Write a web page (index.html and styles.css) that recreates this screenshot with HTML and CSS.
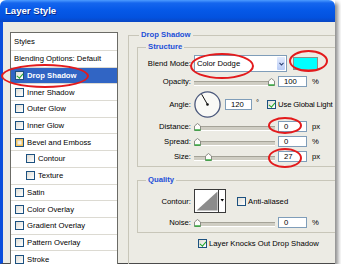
FILE: index.html
```html
<!DOCTYPE html>
<html lang="en">
<head>
<meta charset="UTF-8">
<meta name="viewport" content="width=device-width,initial-scale=1">
<title>Layer Style</title>
<link rel="stylesheet" href="styles.css">
</head>

<body>
    <div class="window">
        <div class="titlebar">Layer Style</div>

        <div class="dialog">
            <!-- left: list of effects -->
            <ul class="style-list">
                <li class="head">Styles</li>
                <li class="head">Blending Options: Default</li>
                <li class="active"><span class="cb on"></span>Drop Shadow</li>
                <li><span class="cb"></span>Inner Shadow</li>
                <li><span class="cb"></span>Outer Glow</li>
                <li><span class="cb"></span>Inner Glow</li>
                <li><span class="cb hover"></span>Bevel and Emboss</li>
                <li class="sub"><span class="cb"></span>Contour</li>
                <li class="sub"><span class="cb"></span>Texture</li>
                <li><span class="cb"></span>Satin</li>
                <li><span class="cb"></span>Color Overlay</li>
                <li><span class="cb"></span>Gradient Overlay</li>
                <li><span class="cb"></span>Pattern Overlay</li>
                <li><span class="cb"></span>Stroke</li>
            </ul>

            <!-- right: drop shadow settings -->
            <fieldset class="group main">
                <legend>Drop Shadow</legend>

                <fieldset class="group">
                    <legend>Structure</legend>
                    <div class="rows">
                        <label>Blend Mode:</label>
                        <div class="ctrl h17">
                            <div class="select">
                                <span class="value">Color Dodge</span>
                                <span class="drop"><svg width="5" height="4" viewBox="0 0 5 4"><path d="M0.5 0.8 L2.5 3 L4.5 0.8" fill="none" stroke="#2b3f72" stroke-width="1.1"/></svg></span>
                            </div>
                            <div class="swatch"></div>
                        </div>

                        <label>Opacity:</label>
                        <div class="ctrl">
                            <div class="slider"><span class="thumb" style="left:74px"><svg width="7" height="8" viewBox="0 0 7 8"><path d="M0.5 7.5 V3 L3.5 0.5 L6.5 3 V7.5 Z" fill="#fdfdfb" stroke="#8b8b84"/><path d="M0.5 7 H6.5" stroke="#2aa836" stroke-width="1.4"/></svg></span></div>
                            <span class="field">100</span><span class="unit">%</span>
                        </div>

                        <label>Angle:</label>
                        <div class="ctrl h26">
                            <svg class="dial" width="27" height="27" viewBox="0 0 27 27">
                                <circle cx="13.5" cy="13.5" r="12.6" fill="#f9f9f6" stroke="#4a587c" stroke-width="1.3"/>
                                <line x1="13.5" y1="13.5" x2="7.6" y2="3.2" stroke="#111" stroke-width="1"/>
                                <circle cx="13.5" cy="13.5" r="1.3" fill="#111"/>
                            </svg>
                            <span class="field angle">120</span><span class="unit deg">°</span>
                            <span class="cb on"></span><span class="cb-label tight">Use Global Light</span>
                        </div>

                        <label>Distance:</label>
                        <div class="ctrl">
                            <div class="slider"><span class="thumb" style="left:0"><svg width="7" height="8" viewBox="0 0 7 8"><path d="M0.5 7.5 V3 L3.5 0.5 L6.5 3 V7.5 Z" fill="#fdfdfb" stroke="#8b8b84"/><path d="M0.5 7 H6.5" stroke="#2aa836" stroke-width="1.4"/></svg></span></div>
                            <span class="field">0</span><span class="unit">px</span>
                        </div>

                        <label>Spread:</label>
                        <div class="ctrl">
                            <div class="slider"><span class="thumb" style="left:0"><svg width="7" height="8" viewBox="0 0 7 8"><path d="M0.5 7.5 V3 L3.5 0.5 L6.5 3 V7.5 Z" fill="#fdfdfb" stroke="#8b8b84"/><path d="M0.5 7 H6.5" stroke="#2aa836" stroke-width="1.4"/></svg></span></div>
                            <span class="field">0</span><span class="unit">%</span>
                        </div>

                        <label>Size:</label>
                        <div class="ctrl">
                            <div class="slider"><span class="thumb" style="left:11px"><svg width="7" height="8" viewBox="0 0 7 8"><path d="M0.5 7.5 V3 L3.5 0.5 L6.5 3 V7.5 Z" fill="#fdfdfb" stroke="#8b8b84"/><path d="M0.5 7 H6.5" stroke="#2aa836" stroke-width="1.4"/></svg></span></div>
                            <span class="field">27</span><span class="unit">px</span>
                        </div>
                    </div>
                </fieldset>

                <fieldset class="group quality">
                    <legend>Quality</legend>
                    <div class="rows">
                        <label>Contour:</label>
                        <div class="ctrl h24">
                            <svg class="contour" width="32" height="24" viewBox="0 0 32 24">
                                <rect x="0.5" y="0.5" width="31" height="23" fill="#fff" stroke="#3a3a3a"/>
                                <polygon points="2.5,21.5 23.5,2.5 23.5,21.5" fill="#8c8c8c"/>
                                <line x1="24.5" y1="0.5" x2="24.5" y2="23.5" stroke="#3a3a3a"/>
                                <polygon points="26.5,10 30,10 28.25,12.5" fill="#000"/>
                            </svg>
                            <span class="cb aa"></span><span class="cb-label">Anti-aliased</span>
                        </div>

                        <label>Noise:</label>
                        <div class="ctrl">
                            <div class="slider"><span class="thumb" style="left:0"><svg width="7" height="8" viewBox="0 0 7 8"><path d="M0.5 7.5 V3 L3.5 0.5 L6.5 3 V7.5 Z" fill="#fdfdfb" stroke="#8b8b84"/><path d="M0.5 7 H6.5" stroke="#2aa836" stroke-width="1.4"/></svg></span></div>
                            <span class="field">0</span><span class="unit">%</span>
                        </div>
                    </div>
                </fieldset>

                <div class="knockout"><span class="cb on"></span><span class="cb-label">Layer Knocks Out Drop Shadow</span></div>
            </fieldset>
        </div>

        <!-- red marker circles drawn over the dialog -->
        <span class="mark m-drop"></span>
        <span class="mark m-mode"></span>
        <span class="mark m-color"></span>
        <span class="mark m-dist"></span>
        <span class="mark m-size"></span>
    </div>
</body>
</html>
```

FILE: styles.css
```css
    :root{
        --face:#ecebe4;
        --xp-blue:#0b4fdc;
        --field:#7f9db9;
        --legend:#1c4fd8;
    }

    *{margin:0;padding:0;box-sizing:border-box}
    body{
        font-family:"Liberation Sans",Arial,sans-serif;
        font-size:7.7px;
        color:#000;
        background:#fff;
    }

    /* window frame ---------- */
    .window{
        position:relative;
        width:335px;
        height:264px;
        overflow:hidden;
        box-shadow:3px 3px 4px rgba(0,0,0,.45);
    }
    .titlebar{
        height:22px;
        padding:5px 0 0 5px;
        font-size:9.6px;
        font-weight:700;
        line-height:12px;
        color:#fff;
        text-shadow:1px 1px 0 #0a2a8a;
        background:linear-gradient(#4d9cff 0,#1566ee 3px,#0659e8 45%,#0352df 80%,#0a47c4 100%);
        border-radius:6px 6px 0 0;
    }
    .dialog{
        display:flex;
        align-items:flex-start;
        gap:10px;
        height:242px;
        padding:8px 0 0 7px;
        background:var(--face);
        border-left:3px solid var(--xp-blue);
        border-bottom:1px solid #4a4a4a;
    }

    /* style list ------------- */
    .style-list{
        list-style:none;
        flex:0 0 108px;
        height:240px;
        margin-top:2px;
        background:#fff;
        border:1px solid #6b6b66;
    }
    .style-list li{
        display:flex;
        align-items:center;
        gap:2px;
        height:16.7px;
        padding-left:4px;
        border-bottom:1px solid #dcdad2;
        white-space:nowrap;
    }
    .style-list li.head{padding-left:3px}
    .style-list li.head:first-child{height:18px}
    .style-list li.sub{padding-left:15px}
    .style-list li.active{
        background:#3165c4;
        color:#fff;
        font-weight:700;
    }

    /* checkboxes */
    .cb{
        position:relative;
        flex:0 0 9px;
        width:9px;
        height:9px;
        margin-right:1px;
        background:linear-gradient(135deg,#dedcd4,#fff);
        border:1px solid #1c5180;
    }
    .cb.hover{box-shadow:inset 0 0 0 1.5px #f4c35e}
    .cb.on::after{
        content:'';
        position:absolute;
        left:2px;
        top:0;
        width:2.5px;
        height:5px;
        border:solid #22a82b;
        border-width:0 1.6px 1.6px 0;
        transform:rotate(40deg);
    }

    /* group boxes ------------ */
    .group{
        border:1px solid #c8c6b9;
        border-right:none;
        padding:0;
    }
    .group legend{
        margin-left:8px;
        padding:0 2px;
        line-height:10px;
        font-weight:700;
        color:var(--legend);
    }
    .group.main{
        flex:0 0 220px;
        height:240px;
        margin-top:0;
        padding-top:2px;
    }
    .group.main > legend{margin-left:10px}
    .group.main > .group{margin-left:8px}
    .group.quality{margin-top:8px}

    .rows{
        display:grid;
        grid-template-columns:53px auto;
        column-gap:3px;
        row-gap:4px;
        align-items:center;
        padding:3px 0 4px;
    }
    .quality .rows{padding-top:4px}
    .rows label{
        text-align:right;
        white-space:nowrap;
    }
    .ctrl{
        display:flex;
        align-items:center;
        height:11px;
        white-space:nowrap;
    }
    .ctrl.h17{height:17px}
    .ctrl.h24{height:24px}
    .ctrl.h26{height:26px}

    /* blend mode select + colour */
    .select{
        display:flex;
        width:93px;
        height:17px;
        background:#fff;
        border:1px solid var(--field);
    }
    .select .value{
        flex:1;
        padding-left:2px;
        line-height:15px;
    }
    .select .drop{
        display:flex;
        align-items:center;
        justify-content:center;
        width:8px;
        margin:1px;
        background:linear-gradient(#e3ebfd,#b9ccf6);
        border-radius:1px;
    }
    .swatch{
        width:25px;
        height:13px;
        margin-left:6px;
        background:#00ffff;
        border:1px solid #8d8d86;
    }

    /* sliders and number fields */
    .slider{
        position:relative;
        width:81px;
        height:11px;
        margin-right:3px;
    }
    .slider::before{
        content:'';
        position:absolute;
        left:0;
        right:0;
        top:5px;
        height:3px;
        background:#cfcdc3;
        border-top:1px solid #a5a398;
        border-bottom:1px solid #fff;
    }
    .thumb{
        position:absolute;
        top:2px;
        display:flex;
    }
    .field{
        width:29px;
        height:11px;
        padding-left:5px;
        line-height:9px;
        background:#fff;
        border:1px solid var(--field);
    }
    .field.angle{
        width:27px;
        margin-left:4px;
    }
    .unit{margin-left:5px}
    .unit.deg{margin:0 8px 4px 4px}
    .dial{flex:none}
    .cb-label{margin-left:1px}
    .cb-label.tight{letter-spacing:-.15px}

    .contour{flex:none;margin-right:11px}

    .knockout{
        display:flex;
        align-items:center;
        height:9px;
        margin:6px 0 0 69px;
        white-space:nowrap;
    }

    /* red marker ellipses ------ */
    .mark{
        position:absolute;
        border:2px solid #e31a1c;
        border-radius:50%;
    }
    .m-drop{left:1px;top:64px;width:88px;height:24px}
    .m-mode{left:190px;top:53px;width:64px;height:26px}
    .m-color{left:289px;top:50px;width:39px;height:22px}
    .m-dist{left:268px;top:117px;width:34px;height:17px}
    .m-size{left:268px;top:148px;width:34px;height:20px}
```
